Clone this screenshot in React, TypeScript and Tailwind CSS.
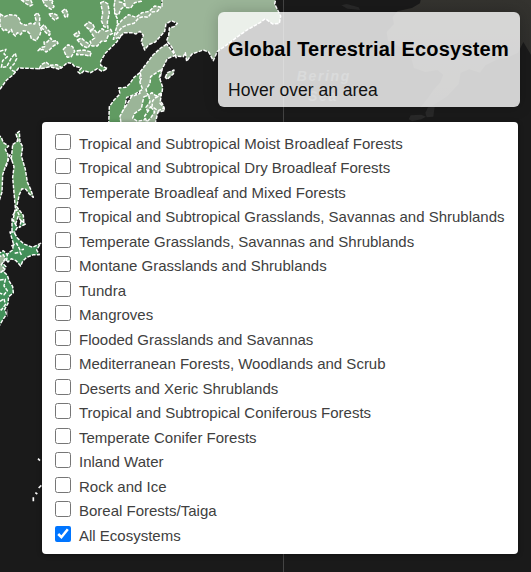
import React from 'react';

const ecosystems = [
  'Tropical and Subtropical Moist Broadleaf Forests',
  'Tropical and Subtropical Dry Broadleaf Forests',
  'Temperate Broadleaf and Mixed Forests',
  'Tropical and Subtropical Grasslands, Savannas and Shrublands',
  'Temperate Grasslands, Savannas and Shrublands',
  'Montane Grasslands and Shrublands',
  'Tundra',
  'Mangroves',
  'Flooded Grasslands and Savannas',
  'Mediterranean Forests, Woodlands and Scrub',
  'Deserts and Xeric Shrublands',
  'Tropical and Subtropical Coniferous Forests',
  'Temperate Conifer Forests',
  'Inland Water',
  'Rock and Ice',
  'Boreal Forests/Taiga',
  'All Ecosystems',
];

// Tundra pockets, drawn over the boreal mainland.
const tundraPatches = [
  'M0 42 L14 50 L28 44 L48 46 L58 56 L62 70 L78 76 L90 70 L104 72 L108 60 L104 46 L112 38 L120 50 L118 72 L124 90 L120 104 L108 122 L94 116 L90 102 L82 94 L70 92 L62 104 L52 98 L46 108 L38 100 L34 88 L26 98 L18 88 L12 94 L0 78 Z',
  'M64 0 L74 8 L90 18 L98 14 L92 0 Z',
  'M128 0 L134 14 L144 22 L154 28 L162 20 L156 8 L160 0 Z',
  'M148 42 L160 40 L172 46 L174 54 L164 60 L154 52 Z',
  'M186 34 L196 26 L204 40 L202 52 L194 50 L192 42 Z',
  'M124 82 L132 74 L142 88 L152 98 L148 106 L138 98 Z',
  'M114 152 L124 142 L134 140 L132 126 L142 126 L152 114 L158 124 L170 122 L174 130 L160 138 L148 150 L138 156 L128 148 Z',
  'M190 148 L204 134 L218 140 L224 154 L214 170 L202 172 L196 162 Z',
  'M222 104 L236 94 L240 104 L228 112 Z',
  'M254 76 L266 66 L278 72 L284 84 L272 90 L262 84 Z',
  'M232 120 L244 114 L258 126 L270 134 L264 144 L248 138 Z',
  'M232 152 L252 150 L274 156 L270 168 L248 164 L230 164 Z',
  'M270 92 L282 88 L292 100 L306 86 L318 94 L332 88 L338 100 L324 108 L318 124 L304 124 L292 138 L276 138 L270 124 L284 114 Z',
  'M302 8 L312 4 L324 12 L328 40 L322 66 L324 84 L312 80 L304 62 L308 38 Z',
  'M118 206 L124 194 L138 186 L150 196 L170 194 L184 202 L178 208 L150 200 L134 204 Z',
];

function MapLayer() {
  return (
    <svg className="absolute inset-0 h-[572px] w-[531px]" viewBox="0 0 1593 1716">
      <defs>
        <linearGradient id="alaska" x1="0" y1="0" x2="0" y2="1">
          <stop offset="0" stopColor="#34332f" />
          <stop offset="1" stopColor="#292928" />
        </linearGradient>
      </defs>
      <path
        fill="url(#alaska)"
        d="M1262 0 L1260 10 L1236 24 L1192 34 L1178 52 L1182 72 L1160 96 L1164 122 L1204 142 L1228 154 L1236 182 L1242 204 L1276 216 L1312 210 L1330 224 L1320 248 L1300 270 L1284 294 L1262 322 L1296 318 L1342 288 L1376 252 L1382 218 L1408 208 L1440 218 L1456 196 L1488 180 L1520 174 L1554 158 L1570 126 L1593 164 L1593 0 Z"
      />
      <path fill="#292929" d="M1024 16 L1040 12 L1076 22 L1080 30 L1042 26 Z M1226 358 L1232 346 L1264 344 L1278 350 L1264 358 L1236 364 Z M1276 338 L1284 322 L1304 320 L1300 350 L1280 352 Z" />
      <path d="M850.5 0 V1716" stroke="#444" strokeWidth="3" />
      <g className="font-['Liberation_Sans',sans-serif] text-[42px] font-bold italic" fill="#454a4d" letterSpacing="5">
        <text x="890" y="242">Bering</text>
        <text x="924" y="303">Sea</text>
      </g>

      <path fill="#619b62" d="M330 0 H484 V24 L440 60 L380 90 L345 105 Z" />
      <g strokeLinejoin="round" strokeLinecap="butt" stroke="#fff" strokeWidth="4.4" strokeDasharray="11 4">
        <path
          fill="#619b62"
          d="M-6 -6 H346 L344 40 L352 56 L352 100 L366 104 L350 126 L334 142 L316 160 L302 184 L302 196 L322 206 L306 214 L292 206 L272 218 L252 212 L242 222 L234 216 L244 204 L222 198 L216 190 L202 188 L184 204 L152 198 L118 206 L56 204 L40 224 L20 240 L-6 276 Z"
        />
        <path
          fill="#9bb598"
          d="M486 -6 L486 22 L464 18 L448 34 L426 38 L408 52 L386 44 L366 60 L352 76 L346 94 L340 118 L356 112 L374 98 L394 98 L408 102 L420 94 L430 106 L424 124 L434 150 L446 134 L466 126 L494 94 L498 72 L514 62 L532 70 L522 80 L508 84 L506 106 L500 122 L516 142 L530 176 L526 168 L550 170 L556 158 L560 184 L576 162 L610 150 L626 156 L640 182 L652 154 L676 138 L710 112 L744 88 L780 68 L796 56 L818 72 L838 70 L842 48 L824 12 L828 -6 Z"
        />
        <path fill="#9bb598" d="M346 -6 L342 20 L346 42 L356 44 L362 28 L374 18 L370 8 L358 6 L360 -6 Z M372 -6 L376 22 L392 24 L404 8 L424 4 L422 -6 Z" />
        <path fill="none" d="M348 104 L366 82 L384 74 L402 70 L416 54 L430 50 L444 52 L456 36 L472 34 L482 22" />
        <path
          fill="#9bb598"
          d="M500 132 L482 144 L458 166 L440 190 L420 216 L424 234 L412 262 L420 280 L394 290 L378 318 L362 338 L358 376 H464 L474 336 L494 332 L490 316 L480 300 L486 270 L478 244 L486 208 L502 176 L526 166 L514 150 Z"
        />
        <path
          fill="#619b62"
          d="M420 218 L402 232 L390 250 L378 262 L356 264 L360 282 L342 300 L328 320 L326 376 H364 L360 348 L374 322 L380 292 L402 284 L428 268 L420 248 Z"
        />
        <g fill="#619b62">
          <path d="M486 208 L478 232 L488 262 L486 278 L468 288 L456 278 L444 286 L438 268 L450 250 L452 230 L472 216 Z" />
          <path d="M432 290 L446 286 L450 306 L438 322 L446 342 L432 360 L412 364 L398 354 L404 340 L424 326 L428 306 Z" />
          <path d="M466 294 L484 284 L480 310 L492 324 L474 332 L456 320 L458 302 Z" fill="#9bb598" />
          <path d="M452 320 L464 336 L452 354 L440 366 L434 348 L444 334 Z" />
        </g>
        <path fill="#9bb598" d="M496 232 L502 218 L522 210 L520 222 L510 230 L502 238 Z" />
        {tundraPatches.map((d) => (
          <path key={d} d={d} fill="#9bb598" />
        ))}
        <path fill="none" d="M0 154 L18 148 L12 162 L22 170 L8 182 L4 202 L20 200 L34 174 L46 160 L50 176 L42 192 L30 204 L38 212 L48 216" />

        {/* Sakhalin and the coast beside it */}
        <path fill="#619b62" d="M-6 404 L4 412 L10 428 L26 438 L16 448 L24 464 L24 480 L16 500 L8 524 L6 576 L-6 614 Z" />
        <path
          fill="#619b62"
          d="M38 434 L54 422 L48 402 L58 394 L60 426 L68 440 L64 468 L76 508 L82 546 L92 568 L100 592 L88 582 L78 568 L66 566 L58 584 L50 620 L70 646 L72 674 L54 650 L44 680 L40 656 L46 624 L42 578 L38 532 L42 500 L34 476 Z"
        />
        <path fill="none" d="M52 426 L54 410 M18 500 L30 464 L36 482 M38 646 L50 628 L60 652" />

        {/* Hokkaido */}
        <path fill="#429059" d="M36 656 L52 682 L42 700 L36 696 Z M64 662 L76 672 L58 682 Z" />
        <path
          fill="#429059"
          d="M30 696 L42 696 L52 714 L72 732 L98 742 L122 730 L110 750 L118 764 L100 764 L80 772 L68 784 L62 798 L48 782 L34 776 L24 786 L14 774 L26 758 L38 750 L40 730 Z"
        />
        <path fill="none" d="M34 738 L50 730 L60 750 L72 748 M44 760 L60 756 L66 768" />

        {/* Honshu */}
        <path fill="#429059" d="M-6 762 L10 752 L22 764 L20 780 L6 788 L18 800 L10 814 L22 826 L28 844 L38 860 L40 878 L26 890 L24 910 L14 928 L20 942 L8 960 L-6 984 Z" />
        <path fill="#9bb598" d="M-6 772 L10 764 L16 776 L4 794 L14 808 L-4 822 Z" />
        <path fill="none" d="M0 840 L16 838 L12 858 L22 872 L12 884 L-4 878 M0 904 L12 896 L16 914 L4 930 L-4 924" />
      </g>
      <path d="M22 928 V950" stroke="#555" strokeWidth="4" />
      <path d="M114 1376 L120 1382 M116 1464 L124 1456 M106 1478 L112 1482 M100 1492 V1504" stroke="#fff" strokeWidth="5" />
    </svg>
  );
}

function EcosystemRow({ label, checked }: { label: string; checked: boolean }) {
  return (
    <label className="flex h-[24.5px] items-start">
      <input type="checkbox" defaultChecked={checked} className="mt-px size-4 shrink-0" />
      <span className="ml-2 mt-px whitespace-nowrap text-[15px] leading-[20px]">{label}</span>
    </label>
  );
}

export default function App() {
  return (
    <main className="relative h-[572px] w-[531px] overflow-hidden bg-[#1a1a1a] font-['Liberation_Sans',Arial,sans-serif]">
      <MapLayer />
      <div className="relative flex flex-col items-end pt-3">
        <section className="mr-[11px] h-[95px] w-[302px] rounded-md bg-white/80 px-2.5 text-black shadow-[0_0_15px_rgba(0,0,0,0.2)]">
          <h1 className="whitespace-nowrap pt-[24px] text-[20px] font-bold leading-[26px] tracking-[0.2px]">Global Terrestrial Ecosystem</h1>
          <p className="mt-[17px] text-[17.5px] leading-[22px] text-[#111]">Hover over an area</p>
        </section>
        <section className="mr-[13px] mt-[15px] h-[432px] w-[476px] rounded-[4px] bg-white pl-[13px] pt-[10.7px] text-[#404040] shadow-[0_1px_5px_rgba(0,0,0,0.4)]">
          {ecosystems.map((name) => (
            <EcosystemRow key={name} label={name} checked={name === 'All Ecosystems'} />
          ))}
        </section>
      </div>
    </main>
  );
}
